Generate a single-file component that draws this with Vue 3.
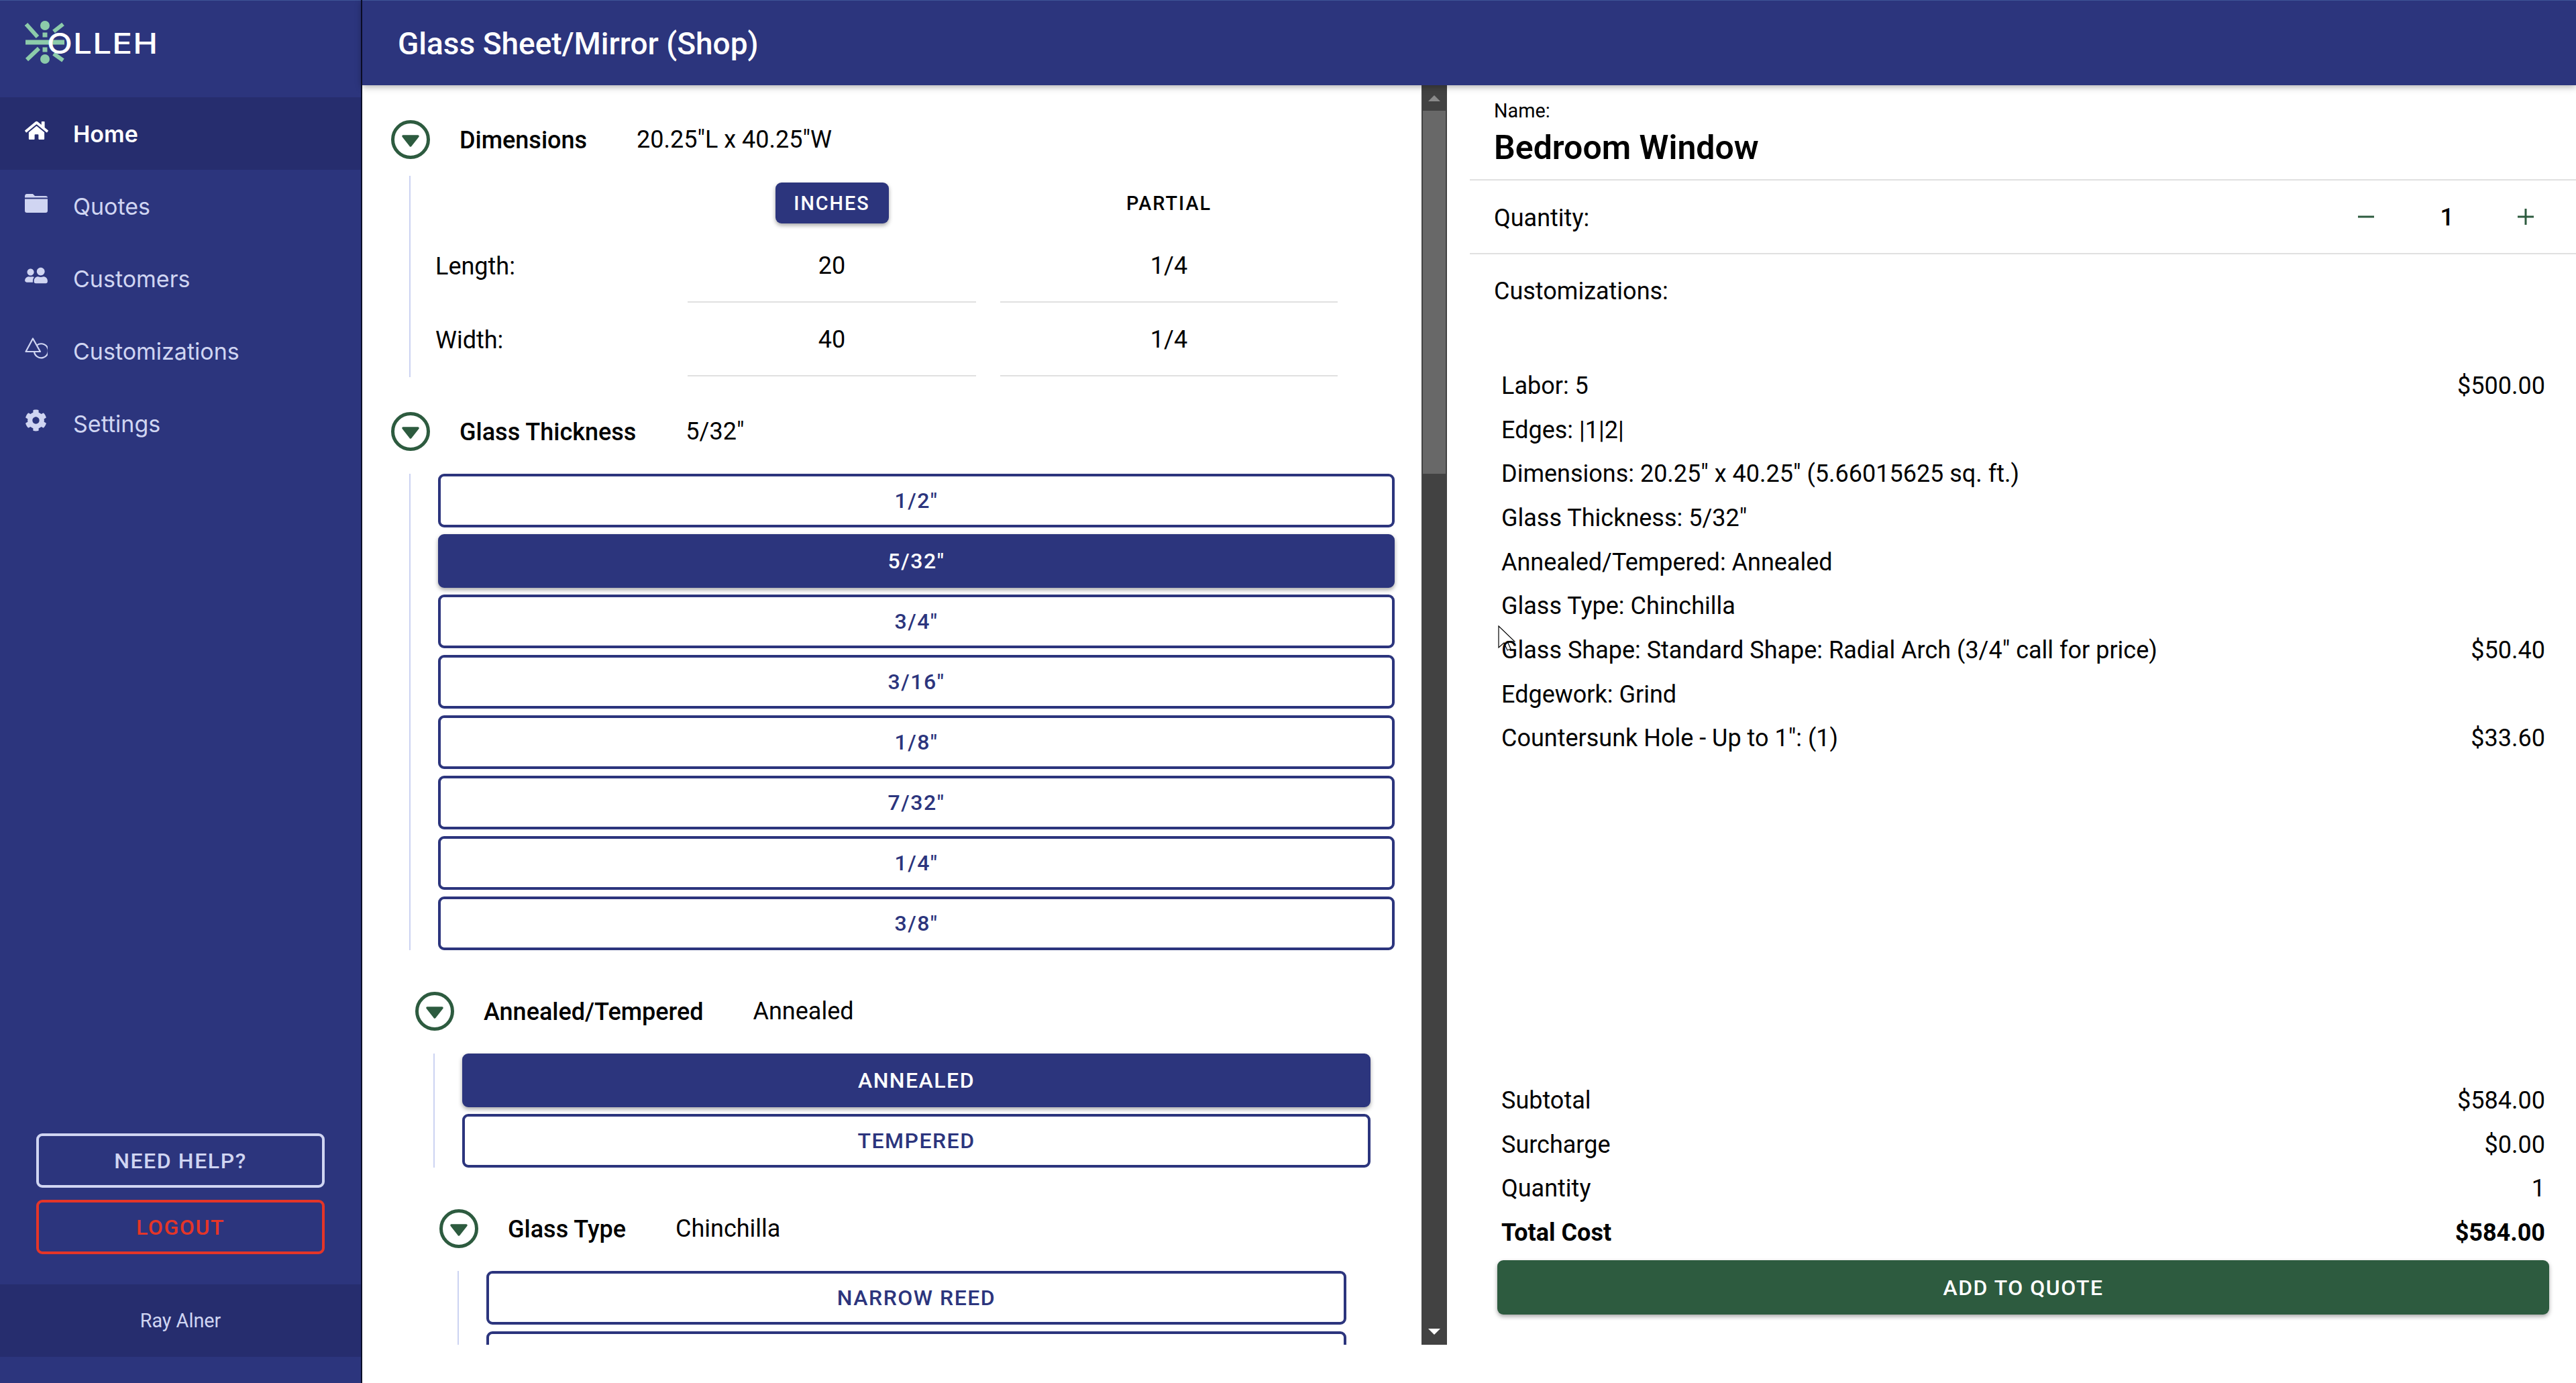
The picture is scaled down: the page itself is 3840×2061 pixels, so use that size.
<script setup>
const navItems = [
  { label: 'Home', icon: 'home', active: true },
  { label: 'Quotes', icon: 'folder' },
  { label: 'Customers', icon: 'users' },
  { label: 'Customizations', icon: 'shapes' },
  { label: 'Settings', icon: 'gear' }
]

const optionSections = [
  {
    level: 1,
    title: 'Glass Thickness',
    value: '5/32"',
    selected: '5/32"',
    options: ['1/2"', '5/32"', '3/4"', '3/16"', '1/8"', '7/32"', '1/4"', '3/8"']
  },
  {
    level: 2,
    title: 'Annealed/Tempered',
    value: 'Annealed',
    selected: 'ANNEALED',
    options: ['ANNEALED', 'TEMPERED']
  },
  {
    level: 3,
    title: 'Glass Type',
    value: 'Chinchilla',
    selected: null,
    options: ['NARROW REED', '']
  }
]

const customizations = [
  { label: 'Labor: 5', price: '$500.00' },
  { label: 'Edges: |1|2|' },
  { label: 'Dimensions: 20.25" x 40.25" (5.66015625 sq. ft.)' },
  { label: 'Glass Thickness: 5/32"' },
  { label: 'Annealed/Tempered: Annealed' },
  { label: 'Glass Type: Chinchilla' },
  { label: 'Glass Shape: Standard Shape: Radial Arch (3/4" call for price)', price: '$50.40' },
  { label: 'Edgework: Grind' },
  { label: 'Countersunk Hole - Up to 1": (1)', price: '$33.60' }
]

const totals = [
  { label: 'Subtotal', value: '$584.00' },
  { label: 'Surcharge', value: '$0.00' },
  { label: 'Quantity', value: '1' },
  { label: 'Total Cost', value: '$584.00', strong: true }
]
</script>

<template>
  <div class="app-shell">
    <aside class="sidebar">
      <div class="logo">
        <svg class="logo-mark" viewBox="0 0 60 66" width="60" height="66">
          <g fill="#8ccbaa">
            <rect x="1" y="29.5" width="58" height="7" />
            <circle cx="30" cy="8" r="7" />
            <circle cx="30" cy="58" r="7" />
            <rect x="26.5" y="18.5" width="7" height="7" />
            <rect x="26.5" y="40.5" width="7" height="7" />
          </g>
          <g stroke="#8ccbaa" stroke-width="6">
            <path d="M2 6 L19 25" />
            <path d="M57 6 L43 17" />
            <path d="M3 59 L21 42" />
            <path d="M57 60 L43 50" />
          </g>
        </svg>
        <span class="logo-text">OLLEH</span>
      </div>

      <nav class="nav">
        <a v-for="item in navItems" :key="item.label" class="nav-item" :class="{ active: item.active }">
          <span class="nav-icon">
            <svg v-if="item.icon === 'home'" viewBox="0 0 576 512" width="35" height="31" fill="currentColor">
              <path d="M280.37 148.26L96 300.11V464a16 16 0 0 0 16 16l112.06-.29a16 16 0 0 0 15.92-16V368a16 16 0 0 1 16-16h64a16 16 0 0 1 16 16v95.64a16 16 0 0 0 16 16.05L464 480a16 16 0 0 0 16-16V300L295.67 148.26a12.19 12.19 0 0 0-15.3 0zM571.6 251.47L488 182.56V44.05a12 12 0 0 0-12-12h-56a12 12 0 0 0-12 12v72.61L318.47 43a48 48 0 0 0-61 0L4.34 251.47a12 12 0 0 0-1.6 16.9l25.5 31A12 12 0 0 0 45.15 301l235.22-193.74a12.19 12.19 0 0 1 15.3 0L530.9 301a12 12 0 0 0 16.9-1.6l25.5-31a12 12 0 0 0-1.7-16.93z" />
            </svg>
            <svg v-else-if="item.icon === 'folder'" viewBox="0 0 34 28" width="34" height="28" fill="currentColor">
              <path d="M0 4 Q0 0 3 0 H12 L15 3 H31 Q34 3 34 5.5 H0 Z" />
              <path d="M0 7.5 H34 V25 Q34 28 31 28 H3 Q0 28 0 25 Z" />
            </svg>
            <svg v-else-if="item.icon === 'users'" viewBox="0 0 640 512" width="34" height="27" fill="currentColor">
              <g transform="translate(640 0) scale(-1 1)">
                <path d="M192 256c61.9 0 112-50.1 112-112S253.9 32 192 32 80 82.1 80 144s50.1 112 112 112zm76.8 32h-8.3c-20.8 10-43.9 16-68.5 16s-47.6-6-68.5-16h-8.3C51.6 288 0 339.6 0 403.2V432c0 26.5 21.5 48 48 48h288c26.5 0 48-21.5 48-48v-28.8c0-63.6-51.6-115.2-115.2-115.2zM480 256c53 0 96-43 96-96s-43-96-96-96-96 43-96 96 43 96 96 96zm48 32h-3.8c-13.9 4.8-28.6 8-44.2 8s-30.3-3.2-44.2-8H432c-20.4 0-39.2 5.9-55.7 15.4 24.4 26.3 39.7 61.2 39.7 99.8v38.4c0 2.2-.5 4.3-.6 6.4H592c26.5 0 48-21.5 48-48 0-61.9-50.1-112-112-112z" />
              </g>
            </svg>
            <svg v-else-if="item.icon === 'shapes'" viewBox="0 0 34 32" width="34" height="32" fill="none" stroke="currentColor" stroke-width="2.2">
              <path d="M12 1.5 L23 21 H1.5 Z" stroke-linejoin="round" />
              <path d="M14 21 A10.5 10.5 0 1 0 18 11.5" />
            </svg>
            <svg v-else viewBox="0 0 512 512" width="33" height="33" fill="currentColor">
              <path d="M487.4 315.7l-42.6-24.6c4.3-23.2 4.3-47 0-70.2l42.6-24.6c4.9-2.8 7.1-8.6 5.5-14-11.1-35.6-30-67.8-54.7-94.6-3.8-4.1-10-5.1-14.8-2.3L380.8 110c-17.9-15.4-38.5-27.3-60.8-35.1V25.8c0-5.6-3.9-10.5-9.4-11.7-36.7-8.2-74.3-7.8-109.2 0-5.5 1.2-9.4 6.1-9.4 11.7V75c-22.2 7.9-42.8 19.8-60.8 35.1L88.7 85.5c-4.9-2.8-11-1.9-14.8 2.3-24.7 26.7-43.6 58.9-54.7 94.6-1.7 5.4.6 11.2 5.5 14L67.3 221c-4.3 23.2-4.3 47 0 70.2l-42.6 24.6c-4.9 2.8-7.1 8.6-5.5 14 11.1 35.6 30 67.8 54.7 94.6 3.8 4.1 10 5.1 14.8 2.3l42.6-24.6c17.9 15.4 38.5 27.3 60.8 35.1v49.2c0 5.6 3.9 10.5 9.4 11.7 36.7 8.2 74.3 7.8 109.2 0 5.5-1.2 9.4-6.1 9.4-11.7v-49.2c22.2-7.9 42.8-19.8 60.8-35.1l42.6 24.6c4.9 2.8 11 1.9 14.8-2.3 24.7-26.7 43.6-58.9 54.7-94.6 1.5-5.5-.7-11.3-5.6-14.1zM256 336c-44.1 0-80-35.9-80-80s35.9-80 80-80 80 35.9 80 80-35.9 80-80 80z" />
            </svg>
          </span>
          <span>{{ item.label }}</span>
        </a>
      </nav>

      <div class="side-actions">
        <button class="side-btn help">NEED HELP?</button>
        <button class="side-btn logout">LOGOUT</button>
      </div>
      <div class="user-name">Ray Alner</div>
    </aside>

    <div class="content">
      <header class="topbar">Glass Sheet/Mirror (Shop)</header>

      <div class="workspace">
        <section class="config-pane">
          <!-- dimensions -->
          <div class="section level-1">
            <div class="section-head">
              <svg class="toggle" viewBox="0 0 58 58" width="58" height="58">
                <circle cx="29" cy="29" r="26.5" fill="none" stroke="#2d5b3f" stroke-width="5" />
                <path d="M18 24 H40 L29 38 Z" fill="#2d5b3f" stroke="#2d5b3f" stroke-width="3.5" stroke-linejoin="round" />
              </svg>
              <span class="section-title">Dimensions</span>
              <span class="section-value">20.25"L x 40.25"W</span>
            </div>
            <div class="section-body dims">
              <div class="dims-grid">
                <span></span>
                <div class="dims-head"><span class="unit-btn">INCHES</span></div>
                <div class="dims-head">PARTIAL</div>
                <span class="dims-label">Length:</span>
                <div class="dims-input">20</div>
                <div class="dims-input">1/4</div>
                <span class="dims-label">Width:</span>
                <div class="dims-input">40</div>
                <div class="dims-input">1/4</div>
              </div>
            </div>
          </div>

          <!-- option groups -->
          <div v-for="section in optionSections" :key="section.title" class="section" :class="'level-' + section.level">
            <div class="section-head">
              <svg class="toggle" viewBox="0 0 58 58" width="58" height="58">
                <circle cx="29" cy="29" r="26.5" fill="none" stroke="#2d5b3f" stroke-width="5" />
                <path d="M18 24 H40 L29 38 Z" fill="#2d5b3f" stroke="#2d5b3f" stroke-width="3.5" stroke-linejoin="round" />
              </svg>
              <span class="section-title">{{ section.title }}</span>
              <span class="section-value">{{ section.value }}</span>
            </div>
            <div class="section-body">
              <button
                v-for="(option, i) in section.options"
                :key="i"
                class="option-btn"
                :class="{ selected: option === section.selected }"
              >{{ option }}</button>
            </div>
          </div>
        </section>

        <div class="scroll-track">
          <span class="arrow up"></span>
          <div class="scroll-thumb"></div>
          <span class="arrow down"></span>
        </div>

        <section class="summary">
          <div class="name-block">
            <div class="name-label">Name:</div>
            <div class="name-value">Bedroom Window</div>
          </div>
          <div class="qty-row">
            <span class="qty-label">Quantity:</span>
            <div class="qty-controls">
              <svg viewBox="0 0 24 24" width="24" height="24" fill="#2d5b3f"><rect x="0" y="10.5" width="24" height="3" /></svg>
              <strong>1</strong>
              <svg viewBox="0 0 24 24" width="24" height="24" fill="#2d5b3f"><rect x="0" y="10.5" width="24" height="3" /><rect x="10.5" y="0" width="3" height="24" /></svg>
            </div>
          </div>
          <div class="custom-title">Customizations:</div>
          <div class="custom-list">
            <div v-for="row in customizations" :key="row.label" class="line">
              <span>{{ row.label }}</span>
              <span v-if="row.price">{{ row.price }}</span>
            </div>
          </div>
          <div class="totals">
            <div v-for="row in totals" :key="row.label" class="line" :class="{ strong: row.strong }">
              <span>{{ row.label }}</span>
              <span>{{ row.value }}</span>
            </div>
          </div>
          <button class="add-btn">ADD TO QUOTE</button>
        </section>
      </div>
    </div>

    <!-- mouse pointer caught in the capture -->
    <svg class="cursor" viewBox="0 0 26 38" width="26" height="38" fill="none" stroke="#000" stroke-width="1.2">
      <path d="M1 1 V33 L9 26 L14 37 L19 35 L14 24 L25 24 Z" />
    </svg>
  </div>
</template>

<style scoped>
.app-shell {
  position: relative;
  display: flex;
  width: 100%;
  height: 100vh;
  overflow: hidden;
  background: #fff;
  font-family: Roboto, "Liberation Sans", sans-serif;
  font-size: 36px;
  color: #000;
}

/* sidebar */
.sidebar {
  width: 540px;
  flex: none;
  box-sizing: border-box;
  display: flex;
  flex-direction: column;
  height: 100%;
  padding-bottom: 39px;
  background: #2c357d;
  border-right: 2px solid #0c0f2a;
  box-shadow: inset 0 1px #3e5596;
  color: #d0d5f2;
}

.logo {
  position: relative;
  height: 145px;
  flex: none;
}

.logo-mark {
  position: absolute;
  left: 37px;
  top: 30px;
}

.logo-text {
  position: absolute;
  left: 70px;
  top: 38px;
  font-family: Inter, sans-serif;
  font-size: 43px;
  line-height: 52px;
  font-weight: 500;
  letter-spacing: 1px;
  color: #fff;
  transform: scaleX(1.15);
  transform-origin: left center;
}

.nav-item {
  display: flex;
  align-items: center;
  height: 108px;
  padding-left: 37px;
  font-family: Inter, sans-serif;
  font-size: 34px;
}

.nav-item.active {
  background: #262d6e;
  color: #fff;
  font-weight: 600;
}

.nav-icon {
  display: flex;
  width: 72px;
  margin-bottom: 9px;
}

.side-actions {
  margin-top: auto;
  padding: 0 54px 45px;
  display: flex;
  flex-direction: column;
  gap: 18px;
}

.side-btn {
  height: 81px;
  background: transparent;
  border: 4px solid #d0d5f2;
  border-radius: 9px;
  color: #d0d5f2;
  font-family: Roboto, sans-serif;
  font-size: 32px;
  font-weight: 500;
  letter-spacing: 1.6px;
}

.side-btn.logout {
  border-color: #e53528;
  color: #e53528;
}

.user-name {
  height: 108px;
  display: flex;
  align-items: center;
  justify-content: center;
  background: #262d6e;
  font-size: 28.8px;
}

/* main */
.content {
  flex: 1;
  min-width: 0;
  display: flex;
  flex-direction: column;
}

.topbar {
  position: relative;
  z-index: 2;
  height: 127px;
  flex: none;
  box-sizing: border-box;
  display: flex;
  align-items: center;
  padding: 2px 0 0 53px;
  background: #2c357d;
  box-shadow: 0 2px 10px rgba(0, 0, 0, 0.35), inset 0 1px #3e5596;
  color: #fff;
  font-size: 46px;
  font-weight: 500;
}

.workspace {
  flex: 1;
  display: flex;
  min-height: 0;
  align-items: flex-start;
}

.config-pane {
  width: 1579px;
  height: 1877px;
  flex: none;
  box-sizing: border-box;
  overflow: hidden;
  padding: 52px 40px 0 43px;
}

.section + .section {
  margin-top: 62px;
}

.section.level-1 + .section.level-1 {
  margin-top: 52px;
}

.section.level-2 {
  margin-left: 36px;
  margin-right: 36px;
}

.section.level-3 {
  margin-left: 72px;
  margin-right: 72px;
}

.section-head {
  display: flex;
  align-items: center;
  height: 58px;
}

.toggle {
  flex: none;
  margin-right: 44px;
}

.section-title {
  font-weight: 500;
  margin-right: 74px;
  padding-top: 2px;
}

.section-body {
  margin: 34px 0 0 27px;
  padding-left: 41px;
  border-left: 2px solid #ccd3f2;
  display: flex;
  flex-direction: column;
  gap: 10px;
}

.option-btn {
  height: 80px;
  flex: none;
  background: #fff;
  border: 4px solid #2c357d;
  border-radius: 9px;
  color: #2c357d;
  font-family: Roboto, sans-serif;
  font-size: 32px;
  font-weight: 500;
  letter-spacing: 1.5px;
}

.option-btn.selected {
  background: #2c357d;
  color: #fff;
  box-shadow: 0 3px 6px rgba(0, 0, 0, 0.35);
}

.section-body.dims {
  margin-top: 25px;
  padding-left: 37px;
  height: 300px;
}

.dims-grid {
  display: grid;
  grid-template-columns: 340px 430px 503px;
  grid-template-rows: 79px 110px 110px;
  column-gap: 36px;
}

.dims-head {
  display: flex;
  align-items: center;
  justify-content: center;
  font-size: 28.8px;
  font-weight: 500;
  letter-spacing: 2px;
  padding-top: 2px;
}

.unit-btn {
  display: flex;
  align-items: center;
  justify-content: center;
  width: 169px;
  height: 61px;
  background: #2c357d;
  border-radius: 9px;
  box-shadow: 0 3px 6px rgba(0, 0, 0, 0.35);
  color: #fff;
}

.dims-label {
  align-self: center;
  padding-top: 2px;
}

.dims-input {
  display: flex;
  align-items: center;
  justify-content: center;
  padding-top: 2px;
  border-bottom: 2px solid #e0e0e0;
}

/* fake scrollbar, it only has to look like the windows one */
.scroll-track {
  position: relative;
  width: 38px;
  height: 1877px;
  flex: none;
  background: #424242;
}

.scroll-thumb {
  position: absolute;
  left: 2px;
  right: 2px;
  top: 38px;
  height: 541px;
  background: #686868;
}

.arrow {
  position: absolute;
  left: 10px;
  border-left: 9px solid transparent;
  border-right: 9px solid transparent;
}

.arrow.up {
  top: 15px;
  border-bottom: 9px solid #8a8a8a;
}

.arrow.down {
  bottom: 15px;
  border-top: 9px solid #fff;
}

.summary {
  flex: 1;
  min-width: 0;
  height: 100%;
  display: flex;
  flex-direction: column;
  padding-left: 34px;
  box-sizing: border-box;
}

.name-block {
  height: 142px;
  box-sizing: border-box;
  flex: none;
  padding: 21px 0 0 36px;
  border-bottom: 2px solid #e0e0e0;
}

.name-label {
  font-size: 28.8px;
  line-height: 34px;
}

.name-value {
  font-size: 50px;
  font-weight: 600;
  line-height: 64px;
  margin-top: 6px;
}

.qty-row {
  height: 110px;
  box-sizing: border-box;
  flex: none;
  display: flex;
  align-items: center;
  justify-content: space-between;
  padding: 0 63px 0 36px;
  border-bottom: 2px solid #e0e0e0;
}

.qty-label {
  padding-top: 4px;
}

.qty-controls {
  display: flex;
  align-items: center;
  gap: 97px;
}

.qty-controls strong {
  font-weight: 500;
  margin: 2px -2px 0 2px;
}

.custom-title {
  padding: 35px 0 0 36px;
  line-height: 40px;
}

.custom-list {
  margin-top: 88px;
  padding: 0 46px 0 47px;
}

.line {
  display: flex;
  justify-content: space-between;
  align-items: center;
  height: 65.7px;
}

.line.strong {
  font-weight: 700;
}

.totals {
  margin-top: auto;
  padding: 0 46px 0 47px;
}

.add-btn {
  flex: none;
  height: 81px;
  margin: 8px 40px 102px 41px;
  background: #2d5b3f;
  border: 0;
  border-radius: 9px;
  box-shadow: 0 3px 6px rgba(0, 0, 0, 0.35);
  color: #fff;
  font-family: Roboto, sans-serif;
  font-size: 32px;
  font-weight: 500;
  letter-spacing: 1.5px;
}

.cursor {
  position: absolute;
  left: 2233px;
  top: 932px;
  z-index: 3;
}
</style>

<style>
html, body {
  margin: 0;
  overflow: hidden;
}
</style>
